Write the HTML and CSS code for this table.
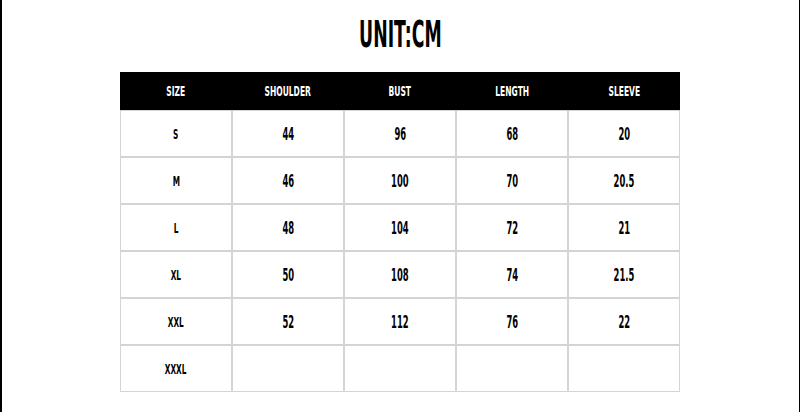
FILE: index.html
```html
<!DOCTYPE html>
<html>
<head>
<meta charset="utf-8">
<link rel="stylesheet" href="styles.css">
</head>
<body>
<div class="page">
  <h1 class="title"><span class="sq">UNIT:CM</span></h1>
  <table class="chart">
    <thead>
      <tr><th><span class="sq">SIZE</span></th><th><span class="sq">SHOULDER</span></th><th><span class="sq">BUST</span></th><th><span class="sq">LENGTH</span></th><th><span class="sq">SLEEVE</span></th></tr>
    </thead>
    <tbody>
      <tr><td class="sz"><span class="sq">S</span></td><td><span class="sq">44</span></td><td><span class="sq">96</span></td><td><span class="sq">68</span></td><td><span class="sq">20</span></td></tr>
      <tr><td class="sz"><span class="sq">M</span></td><td><span class="sq">46</span></td><td><span class="sq">100</span></td><td><span class="sq">70</span></td><td><span class="sq">20.5</span></td></tr>
      <tr><td class="sz"><span class="sq">L</span></td><td><span class="sq">48</span></td><td><span class="sq">104</span></td><td><span class="sq">72</span></td><td><span class="sq">21</span></td></tr>
      <tr><td class="sz"><span class="sq">XL</span></td><td><span class="sq">50</span></td><td><span class="sq">108</span></td><td><span class="sq">74</span></td><td><span class="sq">21.5</span></td></tr>
      <tr><td class="sz"><span class="sq">XXL</span></td><td><span class="sq">52</span></td><td><span class="sq">112</span></td><td><span class="sq">76</span></td><td><span class="sq">22</span></td></tr>
      <tr><td class="sz"><span class="sq">XXXL</span></td><td></td><td></td><td></td><td></td></tr>
    </tbody>
  </table>
</div>
</body>
</html>
```
FILE: styles.css
```css
html, body {
  margin: 0;
  padding: 0;
  background: #fff;
}
.page {
  box-sizing: border-box;
  width: 800px;
  height: 412px;
  border-left: 2px solid #000;
  border-right: 1px solid #000;
  padding-top: 15px;
  font-family: "DejaVu Sans Condensed", "DejaVu Sans", sans-serif;
  font-weight: bold;
  color: #000;
}
.sq {
  display: inline-block;
  transform: scaleX(0.52);
  transform-origin: center;
}
.title {
  margin: 0;
  height: 57px;
  text-align: center;
  font-size: 37px;
  line-height: 40px;
  font-weight: bold;
}
.chart {
  margin-left: 118px;
  width: 560px;
  border-spacing: 0;
  table-layout: fixed;
}
.chart th {
  height: 38px;
  background: #000;
  color: #fff;
  font-size: 14px;
  font-weight: bold;
  padding: 0;
  text-align: center;
  vertical-align: middle;
}
.chart th .sq {
  transform: scaleX(0.6);
}
.chart td {
  height: 45px;
  border: 1px solid #d2d5d0;
  padding: 0;
  text-align: center;
  vertical-align: middle;
  font-size: 18px;
}
.chart td.sz {
  font-size: 14px;
}
.chart td.sz .sq {
  transform: scaleX(0.58);
}
```
